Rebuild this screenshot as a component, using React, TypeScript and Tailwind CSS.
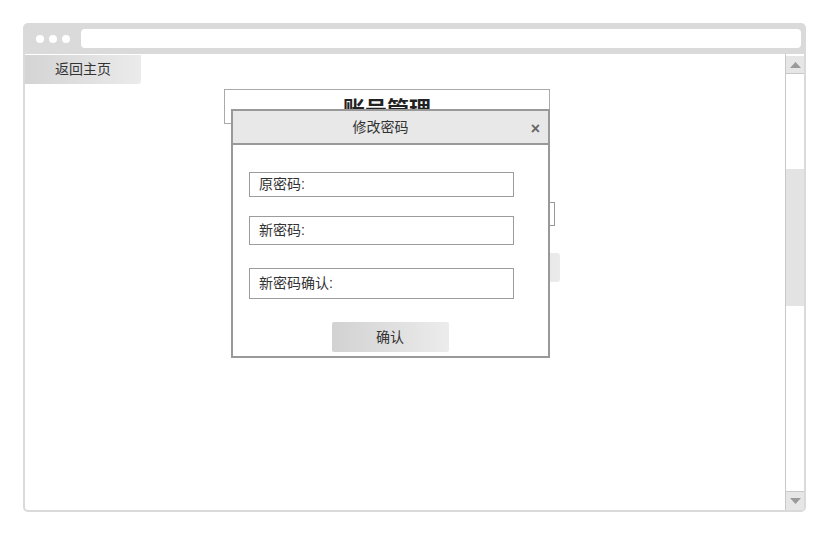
import React from "react";

const Field = ({ label, h }: { label: string; h: string }) => (
  <div
    className={`${h} w-[265px] border border-[#9c9c9c] bg-white flex items-center pl-[9px] text-[14px] text-[#333]`}
  >
    {label}
  </div>
);

const ChangePasswordDialog = () => {
  return (
    <div className="absolute left-[206px] top-[55px] w-[319px] h-[249px] border-2 border-[#999] bg-white flex flex-col">
      <div className="h-[34px] bg-[#e8e8e8] border-b-2 border-[#999] relative flex items-center justify-center pr-[20px] text-[14px] text-[#333]">
        修改密码
        <span className="absolute right-[8px] top-[6px] text-[16px] font-bold text-[#666]">
          ×
        </span>
      </div>
      <div className="flex flex-col pl-[16px]">
        <div className="mt-[27px]">
          <Field label="原密码:" h="h-[25px]" />
        </div>
        <div className="mt-[19px]">
          <Field label="新密码:" h="h-[29px]" />
        </div>
        <div className="mt-[23px]">
          <Field label="新密码确认:" h="h-[31px]" />
        </div>
      </div>
      <div className="flex justify-center mt-[23px] pr-[1px]">
        <button className="w-[117px] h-[30px] rounded-[2px] bg-linear-to-r from-[#d2d2d2] to-[#ececec] text-[14px] text-[#333]">
          确认
        </button>
      </div>
    </div>
  );
};

const Scrollbar = () => (
  <div className="w-[19px] border-l border-[#c8c8c8] flex flex-col pt-[2px] bg-white">
    <div className="h-[18px] bg-[#e6e6e6] border-b border-[#c8c8c8] flex items-center justify-center">
      <svg width="11" height="6" viewBox="0 0 11 6">
        <polygon points="5.5,0 11,6 0,6" fill="#9a9a9a" />
      </svg>
    </div>
    <div className="flex-1 flex flex-col">
      <div className="h-[95px]" />
      <div className="h-[137px] bg-[#e3e3e3]" />
      <div className="flex-1" />
    </div>
    <div className="h-[19px] bg-[#e6e6e6] border-t border-[#c8c8c8] flex items-center justify-center">
      <svg width="11" height="6" viewBox="0 0 11 6">
        <polygon points="0,0 11,0 5.5,6" fill="#9a9a9a" />
      </svg>
    </div>
  </div>
);

export default function App() {
  return (
    <div className="w-[829px] h-[537px] bg-white pt-[23px] pl-[23px] font-['Liberation_Sans','Noto_Sans_CJK_SC',sans-serif]">
      <div className="w-[783px] h-[489px] rounded-[5px] bg-[#dadada] flex flex-col px-[2px] pb-[2px]">
        {/* browser chrome */}
        <div className="h-[31px] flex items-center pl-[11px] pr-[3px] gap-[11px]">
          <div className="flex gap-[5px]">
            <span className="w-[8px] h-[8px] rounded-full bg-white" />
            <span className="w-[8px] h-[8px] rounded-full bg-white" />
            <span className="w-[8px] h-[8px] rounded-full bg-white" />
          </div>
          <div className="flex-1 h-[19px] rounded-[4px] bg-white" />
        </div>

        {/* page body */}
        <div className="flex-1 bg-white flex rounded-b-[3px]">
          <div className="flex-1 relative">
            <button className="mt-px w-[116px] h-[29px] rounded-br-[3px] bg-linear-to-r from-[#d4d4d4] to-[#ebebeb] text-[14px] text-[#333]">
              返回主页
            </button>

            <div className="ml-[199px] mt-[5px] w-[326px] h-[35px] border border-[#aaa] flex justify-center pt-[9px] leading-[22px] text-[22px] font-bold text-[#222]">
              账号管理
            </div>

            <div className="ml-[224px] mt-[78px] w-[306px] h-[24px] border border-[#999]" />

            <div className="ml-[415px] mt-[27px] w-[120px] h-[29px] rounded-[3px] bg-linear-to-r from-[#d4d4d4] to-[#ebebeb]" />

            <ChangePasswordDialog />
          </div>
          <Scrollbar />
        </div>
      </div>
    </div>
  );
}
